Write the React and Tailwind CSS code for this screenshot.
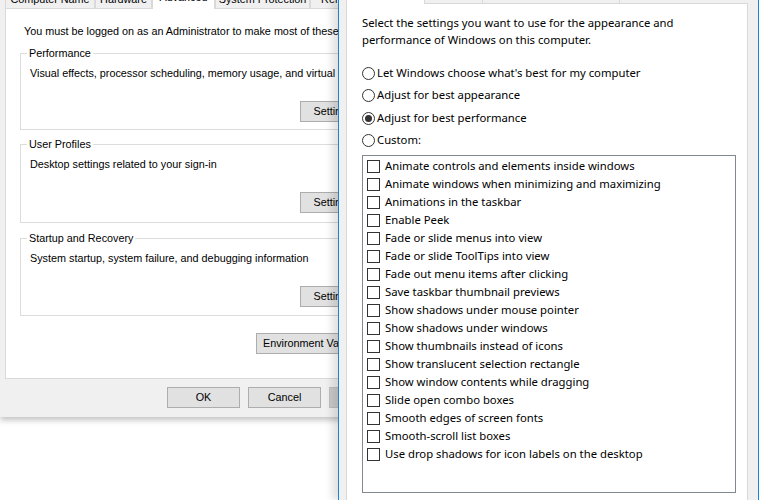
import { useState } from 'react'

const leftFont = { fontFamily: '"Liberation Sans", Arial, sans-serif' }
const rightFont = { fontFamily: '"Noto Sans", "Open Sans", sans-serif' }

const effects = [
  'Animate controls and elements inside windows',
  'Animate windows when minimizing and maximizing',
  'Animations in the taskbar',
  'Enable Peek',
  'Fade or slide menus into view',
  'Fade or slide ToolTips into view',
  'Fade out menu items after clicking',
  'Save taskbar thumbnail previews',
  'Show shadows under mouse pointer',
  'Show shadows under windows',
  'Show thumbnails instead of icons',
  'Show translucent selection rectangle',
  'Show window contents while dragging',
  'Slide open combo boxes',
  'Smooth edges of screen fonts',
  'Smooth-scroll list boxes',
  'Use drop shadows for icon labels on the desktop',
]

const modes = [
  "Let Windows choose what's best for my computer",
  'Adjust for best appearance',
  'Adjust for best performance',
  'Custom:',
]

function WinButton({ children, className = '', disabled }) {
  return (
    <button
      className={`h-[21px] whitespace-nowrap border text-[10.8px] text-black ${disabled ? 'bg-[#cccccc] border-[#bfbfbf]' : 'bg-[#e1e1e1] border-[#adadad]'} ${className}`}
      style={leftFont}
    >
      {children}
    </button>
  )
}

function Group({ title, text, height }) {
  return (
    <div className={`relative ml-[14px] w-[420px] border border-[#dcdcdc] ${height}`}>
      <span className="absolute -top-[8px] left-[6px] bg-white px-[2px] text-[10.8px] leading-[14px] text-black">{title}</span>
      <div className="whitespace-nowrap pl-[9px] pt-[12px] text-[10.8px] leading-[14px] text-black">{text}</div>
      <div className="absolute left-[279px] top-[44px]">
        <WinButton className="w-[75px]">Settings...</WinButton>
      </div>
    </div>
  )
}

function SystemProperties() {
  const tabs = ['Computer Name', 'Hardware', 'Advanced', 'System Protection', 'Remote']
  const widths = ['w-[90px]', 'w-[57px]', 'w-[63px]', 'w-[95px]', 'w-[60px]']
  return (
    <div className="h-[417px] w-[460px] bg-[#f0f0f0] shadow-[0_3px_6px_rgba(0,0,0,0.25)]" style={leftFont}>
      <div className="flex h-[8px] items-end pl-[5px]">
        {tabs.map((t, i) => (
          <div
            key={t}
            className={`flex items-start justify-center whitespace-nowrap border border-b-0 border-[#d9d9d9] text-[10.8px] leading-[14px] text-black ${widths[i]} ${i === 2 ? 'relative z-10 -mb-px h-[24px] bg-white pt-[4px]' : 'h-[20px] bg-[#f0f0f0] pt-[3px]'}`}
          >
            {t}
          </div>
        ))}
      </div>
      <div className="ml-[5px] h-[371px] w-[450px] border border-[#d9d9d9] bg-white">
        <div className="whitespace-nowrap pl-[18px] pt-[15px] text-[10.8px] leading-[14px] text-black">
          You must be logged on as an Administrator to make most of these changes.
        </div>
        <div className="mt-[15px]">
          <Group title="Performance" text="Visual effects, processor scheduling, memory usage, and virtual memory" height="h-[77px]" />
        </div>
        <div className="mt-[14px]">
          <Group title="User Profiles" text="Desktop settings related to your sign-in" height="h-[79px]" />
        </div>
        <div className="mt-[15px]">
          <Group title="Startup and Recovery" text="System startup, system failure, and debugging information" height="h-[78px]" />
        </div>
        <div className="ml-[250px] mt-[14px]">
          <WinButton className="w-[120px] pl-[6px] text-left">Environment Variables...</WinButton>
        </div>
      </div>
      <div className="ml-[167px] mt-[8px] flex gap-[8px]">
        <WinButton className="w-[73px]">OK</WinButton>
        <WinButton className="w-[73px]">Cancel</WinButton>
        <WinButton className="w-[73px]" disabled>Apply</WinButton>
      </div>
    </div>
  )
}

function Radio({ checked, label }) {
  return (
    <div className="flex h-[22.5px] items-center">
      <span className="flex h-[13px] w-[13px] items-center justify-center rounded-full border border-[#333333] bg-white">
        {checked && <span className="h-[7px] w-[7px] rounded-full bg-[#333333]" />}
      </span>
      <span className="ml-[2px] text-[11.3px] text-black">{label}</span>
    </div>
  )
}

function PerformanceOptions() {
  const [mode, setMode] = useState(2)
  const [checks, setChecks] = useState(effects.map(() => false))
  return (
    <div
      className="absolute left-[338px] top-0 h-[500px] w-[421px] border-x border-[#1883d7] bg-[#f0f0f0] shadow-[-6px_0_8px_rgba(0,0,0,0.12)]"
      style={rightFont}
    >
      <div className="flex h-[3px] items-end pl-[7px]">
        <div className="relative z-10 -mb-px h-[8px] w-[79px] border border-b-0 border-[#d9d9d9] bg-white" />
        <div className="h-[6px] w-[58px] border border-b-0 border-l-0 border-[#d9d9d9] bg-[#f0f0f0]" />
        <div className="h-[6px] w-[137px] border border-b-0 border-l-0 border-[#d9d9d9] bg-[#f0f0f0]" />
      </div>
      <div className="ml-[7px] h-[510px] w-[402px] border border-[#d9d9d9] bg-white pl-[15px] pt-[10px]">
        <p className="text-[11.3px] leading-[17px] text-black">
          Select the settings you want to use for the appearance and
          <br />
          performance of Windows on this computer.
        </p>
        <div className="mt-[14px]">
          {modes.map((m, i) => (
            <div key={m} onClick={() => setMode(i)}>
              <Radio checked={mode === i} label={m} />
            </div>
          ))}
        </div>
        <div className="mt-[3px] h-[338px] w-[374px] border border-[#828790] bg-white pl-[4px] pt-[1px]">
          {effects.map((e, i) => (
            <label key={e} className="flex h-[18px] items-center">
              <input
                type="checkbox"
                className="hidden"
                checked={checks[i]}
                onChange={() => setChecks(c => c.map((v, j) => (j === i ? !v : v)))}
              />
              <span className="flex h-[13px] w-[13px] items-center justify-center border border-[#333333] bg-white text-[10px] leading-none">
                {checks[i] ? '✓' : ''}
              </span>
              <span className="ml-[5px] text-[11.3px] text-black">{e}</span>
            </label>
          ))}
        </div>
      </div>
    </div>
  )
}

export default function App() {
  return (
    <div className="relative h-[500px] w-[759px] overflow-hidden bg-white">
      <SystemProperties />
      <PerformanceOptions />
    </div>
  )
}
